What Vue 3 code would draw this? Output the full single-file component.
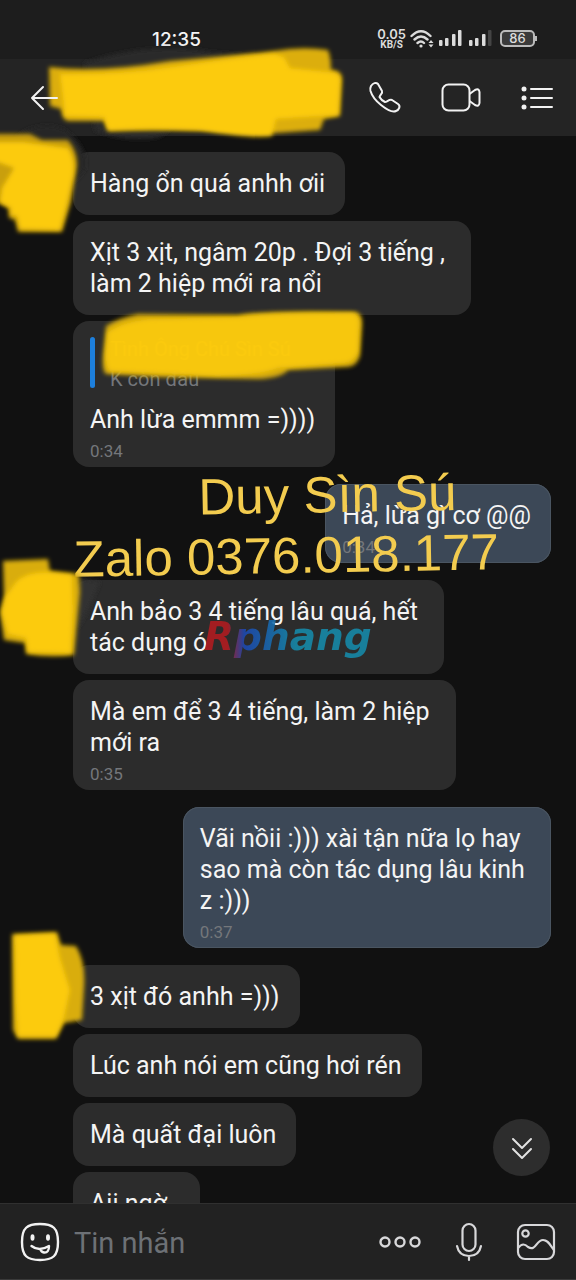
<script setup>
const rows = [
  { id: 1, side: 'in', cover: 'a', lines: ['Hàng ổn quá anhh ơii'] },
  { id: 2, side: 'in', lines: ['Xịt 3 xịt, ngâm 20p . Đợi 3 tiếng ,', 'làm 2 hiệp mới ra nổi'] },
  { id: 3, side: 'in', quote: { name: 'Tình Ông Chú Sìn Sú', text: 'K còn đâu' }, lines: ['Anh lừa emmm =))))'], time: '0:34' },
  { id: 4, side: 'out', first: true, lines: ['Hả, lừa gì cơ @@'], time: '0:34' },
  { id: 5, side: 'in', first: true, cover: 'b', lines: ['Anh bảo 3 4 tiếng lâu quá, hết', 'tác dụng ó'] },
  { id: 6, side: 'in', lines: ['Mà em để 3 4 tiếng, làm 2 hiệp', 'mới ra'], time: '0:35' },
  { id: 7, side: 'out', first: true, lines: ['Vãi nồii :))) xài tận nữa lọ hay', 'sao mà còn tác dụng lâu kinh', 'z :)))'], time: '0:37' },
  { id: 8, side: 'in', first: true, cover: 'c', lines: ['3 xịt đó anhh =)))'] },
  { id: 9, side: 'in', lines: ['Lúc anh nói em cũng hơi rén'] },
  { id: 10, side: 'in', lines: ['Mà quất đại luôn'] },
  { id: 11, side: 'in', lines: ['Aii ngờ..'] },
]
const text = (lines) => lines.join(' \n')
</script>

<template>
  <div class="phone">
    <div class="status">
      <span class="clock">12:35</span>
      <div class="indicators">
        <span class="speed"><b>0.05</b><small>KB/S</small></span>
        <svg class="wifi" viewBox="0 0 24 20" width="24" height="20" fill="none" stroke="#dcdcdc" stroke-width="2.4" stroke-linecap="round">
          <path d="M1.5 7Q11 -2.500 20.500 7M4.500 10.500Q11 4.500 17.500 10.500M7.500 14Q11 11 14 14" />
          <circle cx="11" cy="17" r="1.600" fill="#dcdcdc" stroke="none" />
          <path d="M18.500 14l2.500-3 2.500 3zM18.500 15.500l2.500 3 2.500-3z" fill="#dcdcdc" stroke="none" />
        </svg>
        <svg class="bars" viewBox="0 0 23 18" width="23" height="18" fill="#dcdcdc">
          <rect x="0" y="11" width="3.500" height="6" rx="1" /><rect x="6" y="9" width="3.500" height="8" rx="1" />
          <rect x="13" y="5" width="3.500" height="12" rx="1" /><rect x="19" y="1" width="3.500" height="16" rx="1" />
        </svg>
        <svg class="bars" viewBox="0 0 23 18" width="23" height="18" fill="#dcdcdc">
          <rect x="0" y="11" width="3.500" height="6" rx="1" /><rect x="6" y="9" width="3.500" height="8" rx="1" />
          <rect x="13" y="5" width="3.500" height="12" rx="1" /><rect x="19" y="1" width="3.500" height="16" rx="1" fill="#444" />
        </svg>
        <span class="battery">86</span>
      </div>
    </div>

    <header class="header">
      <button class="icon back" aria-label="Quay lại">
        <svg viewBox="0 0 30 30" width="30" height="30" fill="none" stroke="#f2f2f2" stroke-width="2" stroke-linecap="round" stroke-linejoin="round"><path d="M27 15H2M13 4L2 15l11 11" /></svg>
      </button>
      <svg class="scribble name-cover" viewBox="0 0 320 104" width="320" height="104" aria-hidden="true">
        <path d="M44 20Q110 -2 170 9L230 14L120 94Q90 100 55 88Z" fill="#2b2b2b" filter="url(#soft)" />
        <path d="M9 24Q60 30 130 18Q190 13 234 8Q262 3 288 7Q291 14 291 27Q302 27 302 36L300 73L284 76L280 87L236 90Q160 86 68 88L64 78L28 78Q22 77 21 66L10 63Z" fill="#dcae08" filter="url(#soft)" />
        <path d="M20 31Q80 32 138 23Q190 15 234 11L244 14L250 25L289 29Q301 30 300 38L298 72L236 76L232 93Q210 96 160 87Q110 84 68 87L64 74L25 73Z" fill="#fccb08" filter="url(#soft)" />
      </svg>
      <div class="actions">
        <button class="icon" aria-label="Gọi thoại">
          <svg viewBox="0 0 34 34" width="34" height="34" fill="none" stroke="#f2f2f2" stroke-width="2" stroke-linejoin="round"><path d="M3 5C5 2 8 1 10 3L14 10C15 12 12 14 11.500 16C13 19 15 20 17 21C19 21 21 18 24 19L30 23C33 25 31 29 28 30C24 32 18 28 13 24C8 20 4 15 2.500 10C2 8 2 7 3 5Z" /></svg>
        </button>
        <button class="icon" aria-label="Gọi video">
          <svg viewBox="0 0 40 30" width="40" height="30" fill="none" stroke="#f2f2f2" stroke-width="2" stroke-linejoin="round"><rect x="1.500" y="1.500" width="27" height="26" rx="6" /><path d="M28.500 11L34 7Q38 5 38.500 9V20Q38 24 34 22L28.500 18" /></svg>
        </button>
        <button class="icon" aria-label="Tùy chọn">
          <svg viewBox="0 0 34 26" width="34" height="26" stroke="#f2f2f2" stroke-width="2" stroke-linecap="round"><path d="M11 4H32M11 13H32M11 22H32" /><g fill="#f2f2f2" stroke="none"><circle cx="4" cy="4" r="2.500" /><circle cx="4" cy="13" r="2.500" /><circle cx="4" cy="22" r="2.500" /></g></svg>
        </button>
      </div>
    </header>

    <main class="chat">
      <div v-for="row in rows" :key="row.id" class="row" :class="[row.side, { first: row.first }]">
        <div class="bubble">
          <blockquote v-if="row.quote" class="quote">
            <span class="quote-name">{{ row.quote.name }}</span>
            <span class="quote-text">{{ row.quote.text }}</span>
            <svg class="scribble quote-cover" viewBox="0 0 272 80" width="272" height="80" aria-hidden="true">
              <path d="M8 20Q20 12 40 8L140 9Q170 4 258 6Q265 8 264 20L262 50Q258 62 248 61L190 64Q184 72 160 73L60 71L8 68Q4 66 5 50Z" fill="#d9ad0a" filter="url(#soft)" />
              <path d="M10 26Q24 16 50 13L140 11Q170 7 255 7Q262 9 261 20L260 46Q256 56 246 57L180 62Q165 69 120 70L12 65Q7 60 8 45Z" fill="#fccb08" filter="url(#soft)" />
            </svg>
          </blockquote>
          <p>{{ text(row.lines) }}</p>
          <time v-if="row.time">{{ row.time }}</time>
        </div>
        <svg v-if="row.cover === 'a'" class="scribble cover-a" viewBox="0 0 100 124" width="100" height="124" aria-hidden="true">
          <path d="M14 18Q40 -2 66 10Q90 30 85 50L72 64L60 30Z" fill="#252525" filter="url(#soft)" />
          <path d="M-8 14L30 14L42 20L68 20Q78 32 77 46L71 82L62 112L18 112L15 100L9 98L8 88L-8 80Z" fill="#c99f0a" filter="url(#soft)" />
          <path d="M-8 22L24 22L68 28Q76 40 73 56L67 84L60 110L20 109L17 96L11 95L11 88L0 82L2 68L14 48L-8 40Z" fill="#fccb08" filter="url(#soft)" />
        </svg>
        <svg v-if="row.cover === 'b'" class="scribble cover-b" viewBox="0 0 110 110" width="110" height="110" aria-hidden="true">
          <path d="M78 28L100 32L86 64L76 80Z" fill="#333" filter="url(#soft)" />
          <path d="M3 11L48 9L50 21L79 24L80 42L74 105Q50 108 26 104L25 93L4 90L0 62L4 46Z" fill="#d9ad0a" filter="url(#soft)" />
          <path d="M16 32Q26 22 46 22L72 25L73 60L71 103L28 102L26 88L8 84L2 62L6 46Z" fill="#fccb08" filter="url(#soft)" />
        </svg>
        <svg v-if="row.cover === 'c'" class="scribble cover-c" viewBox="0 0 100 120" width="100" height="120" aria-hidden="true">
          <path d="M12 12L57 10L61 23L76 24Q86 40 84 66L82 98L64 101L56 117L18 117L13 108Z" fill="#d9ad0a" filter="url(#soft)" />
          <path d="M15 14L55 12L60 36L70 68L64 96L56 114L18 114L16 80Z" fill="#fccb08" filter="url(#soft)" />
        </svg>
        <span v-if="row.id === 5" class="brand">Rphang</span>
        <div v-if="row.id === 4" class="mark">
          <span>Duy Sìn Sú</span>
          <span>Zalo 0376.018.177</span>
        </div>
      </div>
      <button class="jump" aria-label="Xuống cuối">
        <svg viewBox="0 0 24 24" width="24" height="24" fill="none" stroke="#e2e2e2" stroke-width="2" stroke-linecap="round" stroke-linejoin="round"><path d="M3 3l9 9 9-9M3 13l9 9 9-9" /></svg>
      </button>
    </main>

    <footer class="composer">
      <button class="icon" aria-label="Biểu tượng cảm xúc">
        <svg viewBox="0 0 40 40" width="40" height="40" fill="none" stroke="#f2f2f2" stroke-width="2.400" stroke-linecap="round" stroke-linejoin="round">
          <path d="M20 2C33 2 38 6 38 20S33 38 20 38S2 34 2 20S7 2 20 2Z" /><path d="M11.500 24Q19 30 29 24Q29 31 24 30.500Q21 30 20.500 27" />
          <g fill="#f2f2f2" stroke="none"><ellipse cx="12.500" cy="15.500" rx="2" ry="3.200" /><ellipse cx="28" cy="15.500" rx="2" ry="3.200" /></g>
        </svg>
      </button>
      <input class="message" type="text" placeholder="Tin nhắn" aria-label="Tin nhắn" />
      <div class="tools">
        <button class="icon" aria-label="Thêm">
          <svg viewBox="0 0 44 14" width="44" height="14" fill="none" stroke="#d8d8da" stroke-width="2.400"><circle cx="7" cy="7" r="4.500" /><circle cx="22" cy="7" r="4.500" /><circle cx="37" cy="7" r="4.500" /></svg>
        </button>
        <button class="icon" aria-label="Ghi âm">
          <svg viewBox="0 0 28 40" width="28" height="40" fill="none" stroke="#d8d8da" stroke-width="2.200" stroke-linecap="round"><rect x="7.500" y="2" width="13" height="27" rx="6.500" /><path d="M2 24Q4 34 14 34T26 24M14 34V38" /></svg>
        </button>
        <button class="icon" aria-label="Ảnh">
          <svg viewBox="0 0 40 38" width="40" height="38" fill="none" stroke="#d8d8da" stroke-width="2.200"><rect x="2" y="2" width="36" height="34" rx="7" /><circle cx="9.500" cy="10.500" r="3.200" /><path d="M2 25C6 20 9 21 12 24C20 29 20 17 27 17C32 17 34 22 38 27" /></svg>
        </button>
      </div>
    </footer>

    <svg class="defs" width="0" height="0" aria-hidden="true"><filter id="soft"><feGaussianBlur stdDeviation="2" /></filter></svg>
  </div>
</template>

<style>
body { background: #111; }
</style>

<style scoped>
* { box-sizing: border-box; }
.phone { height: 100vh; display: flex; flex-direction: column; overflow: hidden; background: #111; color: #f4f4f4; font-family: Roboto, "Noto Sans", sans-serif; }
button { border: 0; padding: 0; background: none; color: inherit; }
.icon { display: flex; }
.defs { position: absolute; }
.status { flex: none; height: 59px; padding: 18px 41px 0 152px; display: flex; justify-content: space-between; background: #1d1d1d; }
.clock { font: 500 19px/43px Inter, sans-serif; }
.indicators { display: flex; align-items: center; height: 41px; color: #dcdcdc; }
.speed { display: flex; flex-direction: column; align-items: center; margin-right: 4px; }
.speed b { font: 600 13px/11px Inter, sans-serif; }
.speed small { font: 700 10px/9px Roboto, sans-serif; }
.bars { margin: 0 0 1px 5px; }
.bars + .bars { margin-left: 7px; }
.battery { position: relative; margin-left: 8px; width: 35px; height: 17px; border: 2px solid #bbb; border-radius: 5px; font: 500 13px/13px Inter, sans-serif; text-align: center; background: #3a3a3a; }
.battery::after { content: ""; position: absolute; right: -4px; top: 4px; width: 2px; height: 5px; background: #bbb; }
.header { position: relative; z-index: 2; flex: none; height: 77px; padding: 0 22px 0 30px; display: flex; align-items: center; justify-content: space-between; background: #242424; }
.back { position: relative; z-index: 1; }
.actions { display: flex; align-items: center; gap: 39px; }
.scribble { position: absolute; overflow: visible; pointer-events: none; }
.name-cover { left: 40px; top: -16px; }
.chat { position: relative; z-index: 3; flex: 1; min-height: 0; padding: 16px 25px 0 73px; display: flex; flex-direction: column; gap: 6px; }
.row { position: relative; flex: none; display: flex; }
.row.first { margin-top: 11px; }
.out { justify-content: flex-end; }
.bubble { padding: 16px 20px 16px 17px; border-radius: 16px; background: #2c2c2c; }
.out .bubble { background: #3c4857; box-shadow: inset 0 0 0 1px #4a5561; }
p { margin: 0; font-size: 25px; line-height: 31px; white-space: pre; }
time { display: block; margin: 5px 0 -11px; font-size: 17px; line-height: 22px; color: #74777b; }
.quote { position: relative; display: flex; flex-direction: column; margin: 0 0 16px; padding-left: 20px; font-size: 20px; line-height: 25px; height: 51px; color: #74777b; }
.quote::before { content: ""; position: absolute; left: 0; top: 0; width: 5px; height: 51px; border-radius: 3px; background: #1d7fdc; }
.quote-name { width: 0; white-space: nowrap; color: #c9a51c; }
.quote-text { padding-top: 5px; }
.quote-cover { left: 8px; top: -31px; opacity: 0.98; }
.cover-a { left: -73px; top: -32px; }
.cover-b { left: -73px; top: -30px; }
.cover-c { left: -73px; top: -43px; }
.mark { position: absolute; right: 53px; top: -18px; z-index: 2; display: flex; flex-direction: column; transform: rotate(-1deg); font: 51px/60px "Liberation Sans", Arial, sans-serif; color: #f3cc4f; white-space: nowrap; }
.mark span:first-child { padding-left: 126px; }
.brand { position: absolute; left: 131px; top: 32px; font: italic bold 39px/50px "DejaVu Sans", sans-serif; background: linear-gradient(90deg, #b01c20 14%, #1d49b0 24%, #1689a8 55%); -webkit-background-clip: text; background-clip: text; color: transparent; opacity: 0.9; }
.row:has(.mark), .row:has(.brand) { z-index: 2; }
.jump { position: absolute; right: 26px; bottom: 27px; width: 57px; height: 57px; display: flex; align-items: center; justify-content: center; border-radius: 50%; background: #2d2d2d; }
.composer { position: relative; z-index: 4; flex: none; height: 77px; padding: 0 20px; display: flex; align-items: center; background: #222; border-top: 1px solid #303030; border-bottom: 1px solid #3a3a3a; }
.message { flex: 1; min-width: 0; margin-left: 14px; padding: 2px 0 0; border: 0; outline: 0; background: none; font: 29px/36px Roboto, "Noto Sans", sans-serif; color: #f4f4f4; }
.message::placeholder { color: #6d7176; opacity: 1; }
.tools { display: flex; align-items: center; gap: 33px; }
</style>
